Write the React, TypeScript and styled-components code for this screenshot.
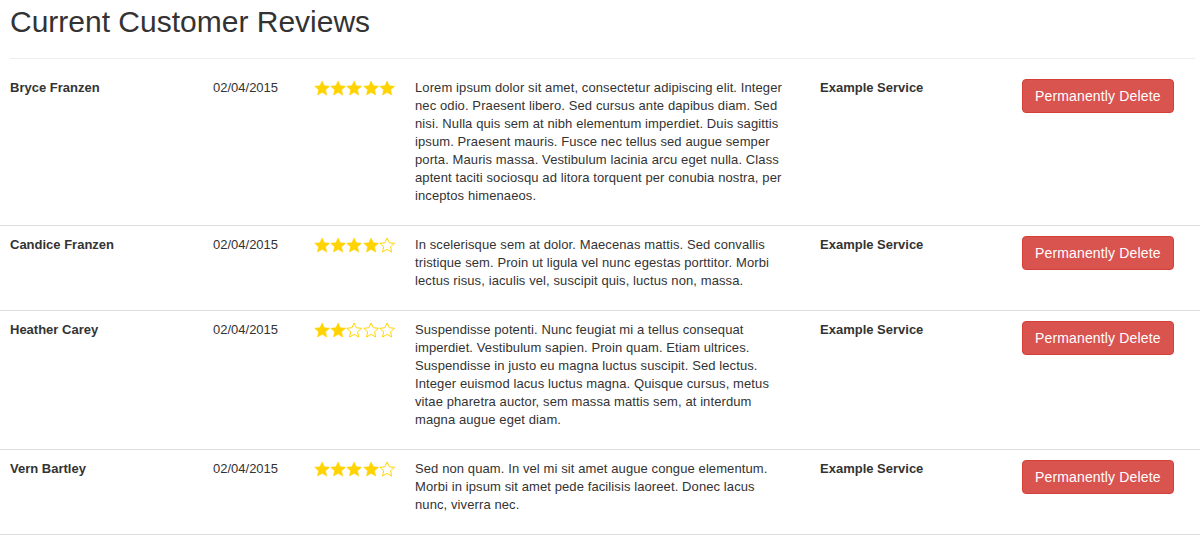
import React from "react";
import styled, { createGlobalStyle } from "styled-components";

const GlobalStyle = createGlobalStyle`
  html, body {
    margin: 0;
    padding: 0;
    background: #fff;
  }
  body {
    font-family: "Liberation Sans", Arial, sans-serif;
    font-size: 13px;
    line-height: 18px;
    color: #333;
  }
`

const Page = styled.div`
  width: 1200px;
`

const Header = styled.div`
  margin: 0 5px 10px 10px;
  padding-top: 5px;
  padding-bottom: 20px;
  border-bottom: 1px solid #eee;
`

const Title = styled.h2`
  margin: 0;
  font-size: 30px;
  line-height: 33px;
  font-weight: 400;
  color: #333;
`

const Row = styled.div`
  display: grid;
  grid-template-columns: 203px 101px 101px 405px 202px 188px;
  padding: 10px 0 10px;
  border-bottom: 1px solid #ddd;
`

const Cell = styled.div<{ $bold?: boolean }>`
  padding: 0 10px;
  font-weight: ${p => (p.$bold ? 700 : 400)};
`

const ReviewText = styled.p`
  margin: 0 0 10px;
  padding-right: 13px;
  letter-spacing: 0.1px;
`

const Stars = styled.div`
  display: flex;
  height: 18px;
  align-items: center;
`

const DangerButton = styled.button`
  display: inline-block;
  padding: 6px 12px;
  font-family: "Liberation Sans", Arial, sans-serif;
  font-size: 14px;
  line-height: 20px;
  letter-spacing: 0.15px;
  color: #fff;
  background-color: #d9534f;
  border: 1px solid #d43f3a;
  border-radius: 4px;
  cursor: pointer;
  white-space: nowrap;
`

const STAR = "M8 0.6 L10.2 5.4 L15.5 6 L11.5 9.5 L12.6 14.8 L8 12.1 L3.4 14.8 L4.5 9.5 L0.5 6 L5.8 5.4 Z"

const Star = ({ filled }: { filled: boolean }) => (
  <svg width="16.4" height="16" viewBox="0 0 16.4 16">
    <path
      d={STAR}
      transform="translate(0.2 0.3)"
      fill={filled ? "#ffd300" : "none"}
      stroke="#ffd300"
      strokeWidth={filled ? 0.6 : 1}
      strokeLinejoin="miter"
    />
  </svg>
)

interface Review {
  name: string
  date: string
  rating: number
  text: string
  service: string
}

const reviews: Review[] = [
  {
    name: "Bryce Franzen",
    date: "02/04/2015",
    rating: 5,
    text: "Lorem ipsum dolor sit amet, consectetur adipiscing elit. Integer nec odio. Praesent libero. Sed cursus ante dapibus diam. Sed nisi. Nulla quis sem at nibh elementum imperdiet. Duis sagittis ipsum. Praesent mauris. Fusce nec tellus sed augue semper porta. Mauris massa. Vestibulum lacinia arcu eget nulla. Class aptent taciti sociosqu ad litora torquent per conubia nostra, per inceptos himenaeos.",
    service: "Example Service",
  },
  {
    name: "Candice Franzen",
    date: "02/04/2015",
    rating: 4,
    text: "In scelerisque sem at dolor. Maecenas mattis. Sed convallis tristique sem. Proin ut ligula vel nunc egestas porttitor. Morbi lectus risus, iaculis vel, suscipit quis, luctus non, massa.",
    service: "Example Service",
  },
  {
    name: "Heather Carey",
    date: "02/04/2015",
    rating: 2,
    text: "Suspendisse potenti. Nunc feugiat mi a tellus consequat imperdiet. Vestibulum sapien. Proin quam. Etiam ultrices. Suspendisse in justo eu magna luctus suscipit. Sed lectus. Integer euismod lacus luctus magna. Quisque cursus, metus vitae pharetra auctor, sem massa mattis sem, at interdum magna augue eget diam.",
    service: "Example Service",
  },
  {
    name: "Vern Bartley",
    date: "02/04/2015",
    rating: 4,
    text: "Sed non quam. In vel mi sit amet augue congue elementum. Morbi in ipsum sit amet pede facilisis laoreet. Donec lacus nunc, viverra nec.",
    service: "Example Service",
  },
]

const App = () => {
  return (
    <Page>
      <GlobalStyle />
      <Header>
        <Title>Current Customer Reviews</Title>
      </Header>
      {reviews.map((r, i) => (
        <Row key={i}>
          <Cell $bold>{r.name}</Cell>
          <Cell>{r.date}</Cell>
          <Cell>
            <Stars>
              {[0, 1, 2, 3, 4].map(n => (
                <Star key={n} filled={n < r.rating} />
              ))}
            </Stars>
          </Cell>
          <Cell>
            <ReviewText>{r.text}</ReviewText>
          </Cell>
          <Cell $bold>{r.service}</Cell>
          <Cell>
            <DangerButton>Permanently Delete</DangerButton>
          </Cell>
        </Row>
      ))}
    </Page>
  )
}

export default App
